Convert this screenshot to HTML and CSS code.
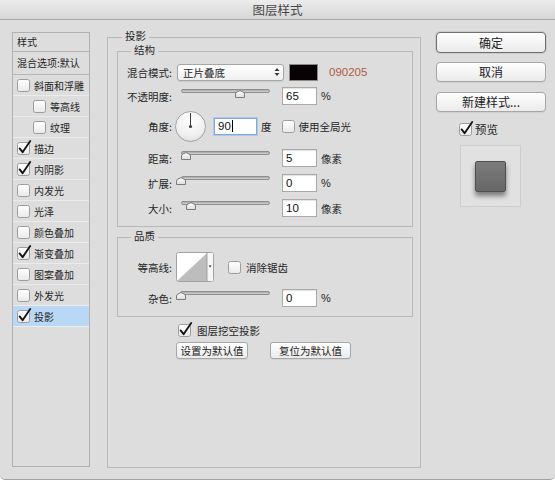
FILE: index.html
```html
<!DOCTYPE html>
<html lang="zh">
<head>
<meta charset="utf-8">
<title>图层样式</title>
<link rel="stylesheet" href="styles.css">
</head>
<body>
<svg class="defs" aria-hidden="true">
  <defs>
    <linearGradient id="gBox" x1="0" y1="0" x2="0" y2="1">
      <stop offset="0" stop-color="#ffffff"/>
      <stop offset="1" stop-color="#e9e9e9"/>
    </linearGradient>
    <radialGradient id="gDial" cx="0.5" cy="0.3" r="0.75">
      <stop offset="0" stop-color="#ffffff"/>
      <stop offset="0.7" stop-color="#efefef"/>
      <stop offset="1" stop-color="#dadada"/>
    </radialGradient>
    <linearGradient id="gThumb" x1="0" y1="0" x2="0" y2="1">
      <stop offset="0" stop-color="#ffffff"/>
      <stop offset="1" stop-color="#dcdcdc"/>
    </linearGradient>
    <symbol id="box" viewBox="0 0 14 14">
      <rect x="0.5" y="1.5" width="12" height="12" rx="2" fill="url(#gBox)" stroke="#9c9c9c"/>
    </symbol>
    <symbol id="tick" viewBox="0 0 14 14" overflow="visible">
      <path d="M2.6 7.4 L5.6 11.2 L13.2 0" fill="none" stroke="#151515" stroke-width="1.9" stroke-linecap="round" stroke-linejoin="round"/>
    </symbol>
    <symbol id="thumb" viewBox="0 0 10 8">
      <path d="M0.5 7.5 V4 Q0.5 2.6 2 2 L5 0.6 L8 2 Q9.5 2.6 9.5 4 V7.5 Z" fill="url(#gThumb)" stroke="#7b7b7b"/>
    </symbol>
  </defs>
</svg>

<div class="window">
  <div class="titlebar">图层样式</div>
  <div class="content">

    <div class="styles-list">
      <div class="list-head">样式</div>
      <div class="list-head blend">混合选项:默认</div>
      <div class="item"><svg class="cb"><use href="#box"/></svg>斜面和浮雕</div>
      <div class="item sub"><svg class="cb"><use href="#box"/></svg>等高线</div>
      <div class="item sub"><svg class="cb"><use href="#box"/></svg>纹理</div>
      <div class="item"><svg class="cb"><use href="#box"/><use href="#tick"/></svg>描边</div>
      <div class="item"><svg class="cb"><use href="#box"/><use href="#tick"/></svg>内阴影</div>
      <div class="item"><svg class="cb"><use href="#box"/></svg>内发光</div>
      <div class="item"><svg class="cb"><use href="#box"/></svg>光泽</div>
      <div class="item"><svg class="cb"><use href="#box"/></svg>颜色叠加</div>
      <div class="item"><svg class="cb"><use href="#box"/><use href="#tick"/></svg>渐变叠加</div>
      <div class="item"><svg class="cb"><use href="#box"/></svg>图案叠加</div>
      <div class="item"><svg class="cb"><use href="#box"/></svg>外发光</div>
      <div class="item selected"><svg class="cb"><use href="#box"/><use href="#tick"/></svg>投影</div>
    </div>

    <div class="main">
      <div class="gtitle">投影</div>

      <div class="box structure">
        <div class="gtitle">结构</div>

        <div class="row r-blend">
          <span class="lbl">混合模式:</span>
          <div class="select">
            <span>正片叠底</span>
            <svg class="updown" viewBox="0 0 6 10"><path d="M0.5 4 L3 1 L5.5 4 Z M0.5 6 L3 9 L5.5 6 Z" fill="#3a3a3a"/></svg>
          </div>
          <span class="swatch"></span>
          <span class="hex">090205</span>
        </div>

        <div class="row r-opacity">
          <span class="lbl">不透明度:</span>
          <div class="slider"><div class="track"></div><svg class="thumb" style="left:53.5px"><use href="#thumb"/></svg></div>
          <span class="num">65</span>
          <span class="unit pct">%</span>
        </div>

        <div class="row r-angle">
          <span class="lbl">角度:</span>
          <svg class="dial" viewBox="0 0 31 31">
            <circle cx="15.5" cy="15.5" r="15" fill="url(#gDial)" stroke="#a3a3a3"/>
            <line x1="15.5" y1="15.5" x2="15.5" y2="2" stroke="#3c3c3c" stroke-width="1"/>
            <circle cx="15.5" cy="15.5" r="1.6" fill="#3c3c3c"/>
          </svg>
          <span class="num angle">90<span class="caret"></span></span>
          <span class="unit">度</span>
          <svg class="cb global"><use href="#box"/></svg>
          <span class="cb-text">使用全局光</span>
        </div>

        <div class="row r-next">
          <span class="lbl">距离:</span>
          <div class="slider"><div class="track"></div><svg class="thumb" style="left:0px"><use href="#thumb"/></svg></div>
          <span class="num">5</span>
          <span class="unit">像素</span>
        </div>

        <div class="row r-next">
          <span class="lbl">扩展:</span>
          <div class="slider"><div class="track"></div><svg class="thumb" style="left:-5px"><use href="#thumb"/></svg></div>
          <span class="num">0</span>
          <span class="unit pct">%</span>
        </div>

        <div class="row r-next">
          <span class="lbl">大小:</span>
          <div class="slider"><div class="track"></div><svg class="thumb" style="left:4.5px"><use href="#thumb"/></svg></div>
          <span class="num">10</span>
          <span class="unit">像素</span>
        </div>
      </div>

      <div class="box quality">
        <div class="gtitle">品质</div>

        <div class="row r-contour">
          <span class="lbl">等高线:</span>
          <svg class="contour" viewBox="0 0 38 30">
            <rect x="0.5" y="0.5" width="37" height="29" rx="2" fill="#ffffff" stroke="#a2a2a2"/>
            <polygon points="1,29 31,1 31,29" fill="#bdbdbd"/>
            <rect x="31" y="1" width="6" height="28" fill="#f6f6f6"/>
            <line x1="31" y1="1" x2="31" y2="29" stroke="#a2a2a2"/>
            <path d="M32.6 13.5 L35.6 13.5 L34.1 15.5 Z" fill="#333"/>
          </svg>
          <svg class="cb antialias"><use href="#box"/></svg>
          <span class="cb-text">消除锯齿</span>
        </div>

        <div class="row r-next">
          <span class="lbl">杂色:</span>
          <div class="slider noise"><div class="track"></div><svg class="thumb" style="left:-4px"><use href="#thumb"/></svg></div>
          <span class="num">0</span>
          <span class="unit pct">%</span>
        </div>
      </div>

      <div class="bottom">
        <div class="knockout"><svg class="cb"><use href="#box"/><use href="#tick"/></svg><span class="cb-text">图层挖空投影</span></div>
        <div class="defaults">
          <div class="btn small set">设置为默认值</div>
          <div class="btn small reset">复位为默认值</div>
        </div>
      </div>
    </div>

    <div class="side">
      <div class="btn default">确定</div>
      <div class="btn cancel">取消</div>
      <div class="btn newstyle">新建样式...</div>
      <div class="preview-toggle"><svg class="cb"><use href="#box"/><use href="#tick"/></svg><span class="cb-text">预览</span></div>
      <div class="preview"><div class="preview-square"></div></div>
    </div>

  </div>
</div>
</body>
</html>
```

FILE: styles.css
```css
* { box-sizing: border-box; }
html, body { margin: 0; padding: 0; }
body {
  width: 555px;
  height: 481px;
  overflow: hidden;
  background: #ffffff;
  font-family: "Noto Sans CJK SC", "Liberation Sans", sans-serif;
  font-size: 10.5px;
  color: #262626;
}
.defs { position: absolute; width: 0; height: 0; overflow: hidden; }

.window {
  height: 480px;
  background: #dddddd;
  border-bottom: 1px solid #a3a3a3;
  border-radius: 0 0 5px 5px;
  display: flex;
  flex-direction: column;
  overflow: hidden;
}
.titlebar {
  flex: none;
  height: 20px;
  border-bottom: 1px solid #a9a9a9;
  background: linear-gradient(#ececec, #d6d6d6);
  text-align: center;
  font-size: 12.5px;
  line-height: 19px;
  color: #484848;
}
.content {
  flex: 1;
  display: flex;
  align-items: flex-start;
  padding: 12px 9px 0 12px;
}

/* left list */
.styles-list {
  flex: none;
  width: 78px;
  height: 435px;
  border: 1px solid #b0b0b0;
  font-size: 10px;
  overflow: hidden;
}
.list-head {
  height: 19px;
  line-height: 18px;
  padding-left: 4px;
  border-bottom: 1px solid #b6b6b6;
  white-space: nowrap;
}
.list-head.blend { height: 23px; line-height: 22px; }
.item {
  height: 21px;
  display: flex;
  align-items: center;
  gap: 3px;
  padding-left: 4px;
  border-bottom: 1px solid #ececec;
  white-space: nowrap;
}
.item.sub { padding-left: 20px; }
.item.selected { background: #b9d8f6; }

.cb { width: 14px; height: 14px; flex: none; overflow: visible; }

/* main panel */
.main {
  flex: none;
  width: 314px;
  height: 431px;
  margin: 5px 0 0 17px;
  border: 1px solid #b8b8b8;
  padding: 0 7px 0 9px;
  display: flex;
  flex-direction: column;
}
.gtitle {
  align-self: flex-start;
  margin-top: -8px;
  height: 12px;
  line-height: 12px;
  padding: 0 3px;
  background: #dddddd;
}
.main > .gtitle { margin-left: 5px; }
.box {
  border: 1px solid #b8b8b8;
  display: flex;
  flex-direction: column;
}
.box > .gtitle { margin-left: 13px; }
.structure { margin-top: 9px; padding-bottom: 9px; }
.quality { margin-top: 10px; padding-bottom: 9px; }

.row { display: flex; align-items: center; height: 18px; white-space: nowrap; }
.r-blend { margin-top: 7px; }
.r-opacity { margin-top: 6px; }
.r-angle { margin-top: 5px; height: 32px; }
.r-next { margin-top: 7px; }
.r-contour { margin-top: 10px; height: 30px; }

.lbl { flex: none; width: 56px; text-align: right; padding-right: 2px; }

.select {
  flex: none;
  margin-left: 3px;
  width: 107px;
  height: 17px;
  border: 1px solid #a6a6a6;
  border-radius: 3px;
  background: linear-gradient(#ffffff, #efefef);
  box-shadow: 0 1px 1px rgba(0, 0, 0, 0.08);
  display: flex;
  align-items: center;
  justify-content: space-between;
  padding: 0 3px 0 5px;
  line-height: 15px;
}
.updown { width: 6px; height: 10px; }
.swatch {
  flex: none;
  margin-left: 5px;
  width: 29px;
  height: 17px;
  background: #090205;
  border: 1px solid #8a8a8a;
}
.hex {
  margin-left: 11px;
  font-family: "Liberation Sans", sans-serif;
  font-size: 11.5px;
  color: #b35b43;
}

.slider {
  flex: none;
  position: relative;
  margin-left: 7px;
  width: 89px;
  height: 18px;
}
.slider.noise { margin-left: 6px; width: 90px; }
.track {
  margin-top: 2px;
  height: 4px;
  border: 1px solid #8e8e8e;
  border-radius: 2px;
  background: linear-gradient(#a9a9a9, #d2d2d2);
}
.thumb {
  position: absolute;
  top: 3px;
  width: 10px;
  height: 8px;
}

.num {
  flex: none;
  margin-left: 12px;
  width: 35px;
  height: 18px;
  background: #ffffff;
  border: 1px solid #a9a9a9;
  box-shadow: inset 0 1px 1px rgba(0, 0, 0, 0.12);
  font-family: "Liberation Sans", sans-serif;
  font-size: 11.5px;
  line-height: 16px;
  padding-left: 3px;
  color: #111111;
}
.num.angle {
  margin-left: 8px;
  width: 43px;
  height: 17px;
  line-height: 15px;
  border-color: #7ea8e4;
  box-shadow: 0 0 0 1px rgba(126, 168, 228, 0.4);
}
.caret {
  display: inline-block;
  width: 1px;
  height: 12px;
  margin-left: 1px;
  background: #000000;
  vertical-align: -2px;
}
.unit { margin-left: 4px; }
.unit.pct { font-family: "Liberation Sans", sans-serif; font-size: 11px; }

.dial { flex: none; margin-left: 1px; width: 31px; height: 31px; }
.cb.global { margin-left: 10px; }
.cb-text { margin-left: 3px; }

.contour { flex: none; margin-left: 2px; width: 38px; height: 30px; }
.cb.antialias { margin-left: 14px; }
.antialias + .cb-text { margin-left: 4px; }

.bottom {
  margin-left: 59px;
  display: flex;
  flex-direction: column;
  align-items: flex-start;
}
.knockout {
  margin-top: 6px;
  margin-left: 2px;
  height: 14px;
  display: flex;
  align-items: center;
  white-space: nowrap;
}
.knockout .cb-text { margin-left: 5px; }
.defaults { margin-top: 5px; display: flex; gap: 22px; }

.btn {
  height: 20px;
  border: 1px solid #a6a6a6;
  border-radius: 4px;
  background: linear-gradient(#fefefe, #ebebeb);
  box-shadow: 0 1px 1px rgba(0, 0, 0, 0.06);
  text-align: center;
  font-size: 12px;
  line-height: 18px;
  color: #222222;
  white-space: nowrap;
}
.btn.small {
  height: 17px;
  font-size: 10.5px;
  line-height: 15px;
  border-radius: 3px;
}
.btn.set { width: 72px; }
.btn.reset { width: 81px; }

/* right column */
.side {
  flex: none;
  width: 110px;
  margin-left: 15px;
  display: flex;
  flex-direction: column;
}
.btn.default {
  height: 21px;
  line-height: 19px;
  border-color: #6f6f6f;
  box-shadow: 0 0 0 1px rgba(0, 0, 0, 0.08);
}
.btn.cancel { margin-top: 9px; }
.btn.newstyle { margin-top: 10px; }
.preview-toggle {
  margin-top: 10px;
  padding-left: 23px;
  height: 14px;
  display: flex;
  align-items: center;
  font-size: 11.5px;
}
.preview-toggle .cb-text { margin-left: 2px; }
.preview {
  margin: 9px 0 0 24px;
  width: 61px;
  height: 62px;
  background: #e1e1e1;
  border: 1px solid #cdcdcd;
  padding: 15px 0 0 14px;
}
.preview-square {
  width: 31px;
  height: 31px;
  border: 1px solid #4f4f4f;
  border-radius: 2px;
  background: linear-gradient(#7c7c7c, #676767);
  box-shadow: 0 4px 5px rgba(0, 0, 0, 0.45);
}
```
